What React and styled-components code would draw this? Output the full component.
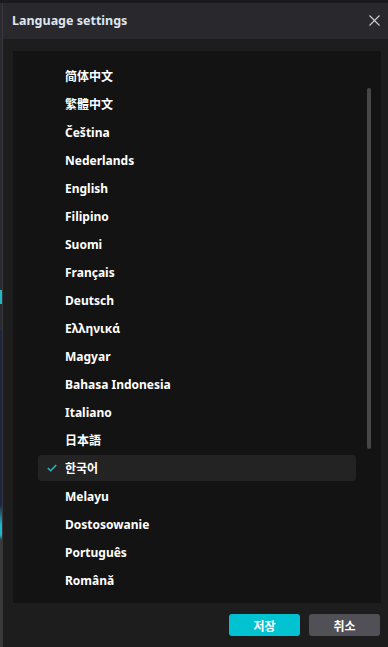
import React from "react";
import styled, { createGlobalStyle } from "styled-components";

const Global = createGlobalStyle`
  html, body { margin: 0; padding: 0; background: #121215; }
  * { box-sizing: border-box; }
  body { font-family: "Noto Sans", "Noto Sans CJK KR", sans-serif; }
`;

const Screen = styled.div`
  width: 388px;
  height: 647px;
  display: flex;
  overflow: hidden;
  background: #1b1b1f;
`;

const PageEdge = styled.div`
  width: 2px;
  flex: none;
  background:
    linear-gradient(#1b1b1f 0 3px, transparent 3px),
    linear-gradient(to bottom,
      #2a2a30 0, #2a2a30 290px,
      #1fb8c8 290px, #1fb8c8 304px,
      #2a2a30 304px, #2a2a30 330px,
      #1c2540 330px, #1c2540 505px,
      #1fb8c8 525px, #1fb8c8 535px,
      #3a3a3a 540px, #3a3a3a 647px);
`;

const Dialog = styled.div`
  flex: 1;
  margin-top: 3px;
  display: flex;
  flex-direction: column;
  background: #1d1d1d;
  border-left: 1px solid #38383c;
`;

const Header = styled.div`
  height: 36px;
  flex: none;
  display: flex;
  align-items: center;
  justify-content: space-between;
  padding: 0 6px 1px 9px;
  background: #28282d;
`;

const Title = styled.div`
  color: #dfe4ee;
  font-size: 12.5px;
  font-weight: 700;
`;

const CloseButton = styled.button`
  width: 14px;
  height: 14px;
  padding: 0;
  border: 0;
  background: transparent;
  display: flex;
  align-items: center;
  justify-content: center;
  margin-right: 1px;
`;

const Body = styled.div`
  flex: 1;
  display: flex;
  flex-direction: column;
  padding: 12px 7px 0 10px;
`;

const ListPanel = styled.div`
  position: relative;
  height: 552px;
  background: #131313;
  padding: 12px 25px 0 25px;
  display: flex;
  flex-direction: column;
  gap: 2px;
  overflow: hidden;
`;

const Row = styled.div`
  height: 26px;
  flex: none;
  width: 318px;
  display: flex;
  align-items: center;
  padding-left: 27px;
  position: relative;
  border-radius: 4px;
  background: ${(p) => (p.$selected ? "#232323" : "transparent")};
  color: #ffffff;
  font-size: 12px;
  font-weight: 700;
  font-family: "Noto Sans", "Noto Sans CJK SC", "Noto Sans CJK KR", sans-serif;
`;

const Check = styled.svg`
  position: absolute;
  left: 9px;
  top: 9px;
`;

const Thumb = styled.div`
  position: absolute;
  right: 10px;
  top: 37px;
  width: 4px;
  height: 361px;
  border-radius: 2px;
  background: #474747;
`;

const Footer = styled.div`
  display: flex;
  justify-content: flex-end;
  gap: 9px;
  padding: 11px 1px 0 0;
`;

const Button = styled.button`
  width: 71px;
  height: 22px;
  border: 0;
  border-radius: 3px;
  background: ${(p) => (p.$primary ? "#00c2d0" : "#505056")};
  color: #ffffff;
  font-family: "Noto Sans CJK KR", sans-serif;
  font-size: 12px;
  font-weight: 700;
  display: flex;
  align-items: center;
  justify-content: center;
  padding: 0;
`;

const languages = [
  "简体中文",
  "繁體中文",
  "Čeština",
  "Nederlands",
  "English",
  "Filipino",
  "Suomi",
  "Français",
  "Deutsch",
  "Ελληνικά",
  "Magyar",
  "Bahasa Indonesia",
  "Italiano",
  "日本語",
  "한국어",
  "Melayu",
  "Dostosowanie",
  "Português",
  "Română",
];

export default function App() {
  return (
    <>
      <Global />
      <Screen>
        <PageEdge />
        <Dialog>
          <Header>
            <Title>Language settings</Title>
            <CloseButton aria-label="close">
              <svg width="11" height="11" viewBox="0 0 11 11">
                <path d="M0.5 0.5 L10.5 10.5 M10.5 0.5 L0.5 10.5" stroke="#d0d0d0" strokeWidth="1.1" />
              </svg>
            </CloseButton>
          </Header>
          <Body>
            <ListPanel>
              {languages.map((l) => (
                <Row key={l} $selected={l === "한국어"}>
                  {l === "한국어" && (
                    <Check width="10" height="8" viewBox="0 0 10 8">
                      <path d="M0.8 4 L3.6 6.8 L9.2 1" fill="none" stroke="#22b9c9" strokeWidth="1.5" />
                    </Check>
                  )}
                  {l}
                </Row>
              ))}
              <Thumb />
            </ListPanel>
            <Footer>
              <Button $primary>저장</Button>
              <Button>취소</Button>
            </Footer>
          </Body>
        </Dialog>
      </Screen>
    </>
  );
}
